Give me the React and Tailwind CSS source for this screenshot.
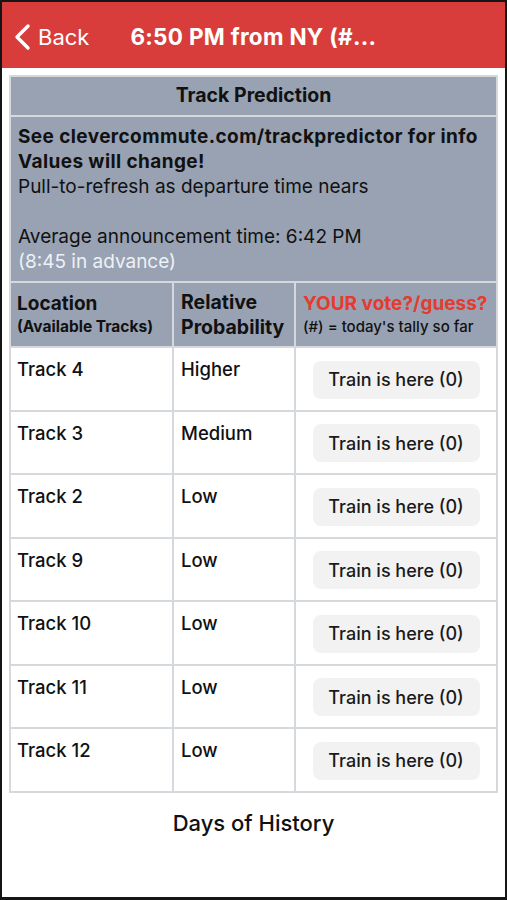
import React from "react";

const rows = [
  { track: "Track 4", prob: "Higher" },
  { track: "Track 3", prob: "Medium" },
  { track: "Track 2", prob: "Low" },
  { track: "Track 9", prob: "Low" },
  { track: "Track 10", prob: "Low" },
  { track: "Track 11", prob: "Low" },
  { track: "Track 12", prob: "Low" },
];

const App = () => {
  return (
    <div
      className="h-[900px] w-[507px] overflow-hidden border-x-2 border-t-2 border-b-[3px] border-[#151515] bg-white text-[#111]"
      style={{ fontFamily: "Inter, 'Noto Sans', sans-serif" }}
    >
      {/* Nav bar */}
      <div className="flex h-[66px] items-center bg-[#d83d3b] pt-[4px] text-white">
        <div className="flex items-center pl-[11px]">
          <svg width="20" height="28" viewBox="0 0 20 28" fill="none">
            <path
              d="M15 3 L4 14 L15 25"
              stroke="white"
              strokeWidth="3.4"
              strokeLinecap="round"
              strokeLinejoin="round"
            />
          </svg>
          <span className="ml-[5px] text-[22px] leading-none">Back</span>
        </div>
        <span className="ml-[41px] text-[22.5px] font-bold leading-none tracking-[0.3px]">
          6:50 PM from NY (#...
        </span>
      </div>

      {/* Table */}
      <div className="px-[7px] pt-[7px]">
        <div className="grid grid-cols-[161px_120px_1fr] gap-[2px] bg-[#d5d8dd] p-[2px]">
          <div className="col-span-3 flex h-[38px] items-center justify-center bg-[#98a2b3] text-[19.5px] font-bold">
            Track Prediction
          </div>

          <div className="col-span-3 bg-[#98a2b3] px-[7px] pt-[7px] pb-[7px] text-[19px] leading-[25px]">
            <div className="font-bold tracking-[0.4px]">See clevercommute.com/trackpredictor for info</div>
            <div className="font-bold tracking-[0.4px]">Values will change!</div>
            <div>Pull-to-refresh as departure time nears</div>
            <div>&nbsp;</div>
            <div>Average announcement time: 6:42 PM</div>
            <div className="text-[#eef1f5]">(8:45 in advance)</div>
          </div>

          <div className="flex h-[63px] flex-col justify-center bg-[#98a2b3] px-[6px]">
            <div className="text-[19px] font-bold leading-[25px]">Location</div>
            <div className="text-[15.5px] font-bold leading-[22px]">(Available Tracks)</div>
          </div>
          <div className="flex h-[63px] flex-col justify-center bg-[#98a2b3] px-[7px] text-[19.5px] font-bold leading-[25px]">
            <div>Relative</div>
            <div>Probability</div>
          </div>
          <div className="flex h-[63px] flex-col justify-center bg-[#98a2b3] px-[7px]">
            <div className="text-[19px] font-bold leading-[25px] text-[#e63a2e]">YOUR vote?/guess?</div>
            <div className="text-[15px] font-medium leading-[22px]">(#) = today's tally so far</div>
          </div>

          {rows.map((r) => (
            <React.Fragment key={r.track}>
              <div className="h-[61.5px] bg-white px-[6px] pt-[9px] text-[18.5px] font-medium leading-[24px]">
                {r.track}
              </div>
              <div className="h-[61.5px] bg-white px-[7px] pt-[9px] text-[18.5px] font-medium leading-[24px]">
                {r.prob}
              </div>
              <div className="flex h-[61.5px] items-center justify-center bg-white pt-[2px]">
                <button className="h-[38px] w-[167px] rounded-[8px] bg-[#f2f2f2] text-[18px] font-medium text-[#1a1a1a]">
                  Train is here (0)
                </button>
              </div>
            </React.Fragment>
          ))}
        </div>

        <div className="pt-[16px] text-center text-[22px] font-medium leading-[28px]">
          Days of History
        </div>
      </div>
    </div>
  );
};

export default App;
